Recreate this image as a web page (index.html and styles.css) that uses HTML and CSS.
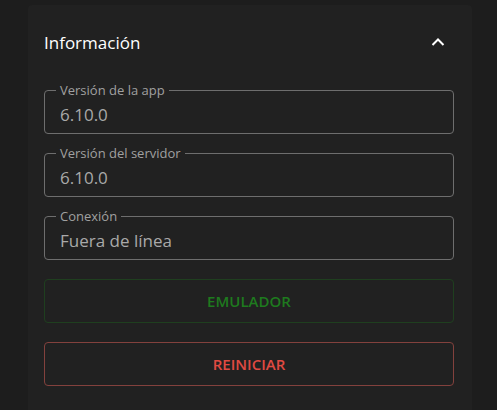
FILE: index.html
```html
<!DOCTYPE html>
<html lang="es">
<head>
  <meta charset="UTF-8">
  <title>Información</title>
  <link rel="stylesheet" href="styles.css">
</head>
<body>
  <div class="panel">
    <div class="panel-head">
      <span class="panel-title">Información</span>
      <svg class="chevron" width="14" height="10" viewBox="0 0 14 10"><path d="M1.5 8 L7 2.5 L12.5 8" fill="none" stroke="#fff" stroke-width="2"/></svg>
    </div>
    <div class="field">
      <span class="field-label">Versión de la app</span>
      <span class="field-value">6.10.0</span>
    </div>
    <div class="field">
      <span class="field-label">Versión del servidor</span>
      <span class="field-value">6.10.0</span>
    </div>
    <div class="field">
      <span class="field-label">Conexión</span>
      <span class="field-value">Fuera de línea</span>
    </div>
    <button class="btn btn-green">Emulador</button>
    <button class="btn btn-red">Reiniciar</button>
  </div>
</body>
</html>
```

FILE: styles.css
```css
* { margin: 0; padding: 0; box-sizing: border-box; }
body {
  background: #1d1d1d;
  font-family: 'Open Sans', 'Noto Sans', sans-serif;
  height: 410px;
  overflow: hidden;
}
.panel {
  margin: 5px 0 0 28px;
  width: 444px;
  height: 420px;
  background: #212121;
  border-radius: 4px;
  padding: 21px 18px 0 16px;
  display: flex;
  flex-direction: column;
  gap: 19px;
}
.panel-head {
  height: 32px;
  display: flex;
  align-items: center;
  justify-content: space-between;
  margin-bottom: 13px;
  padding-right: 9px;
}
.panel-title {
  color: #fff;
  font-size: 17px;
}
.field {
  position: relative;
  height: 44px;
  border: 1px solid #6e6e6e;
  border-radius: 4px;
  display: flex;
  align-items: center;
  padding: 4px 15px 0;
}
.field-label {
  position: absolute;
  top: -9px;
  left: 11px;
  padding: 0 4px;
  background: #212121;
  color: #a0a0a0;
  font-size: 13px;
  line-height: 16px;
}
.field-value {
  color: #a9a9a9;
  font-size: 17px;
}
.btn {
  height: 44px;
  background: transparent;
  border-radius: 4px;
  font-family: inherit;
  font-size: 15px;
  font-weight: 600;
  text-transform: uppercase;
}
.btn-green {
  border: 1px solid #1f3f1f;
  color: #1e7a1e;
}
.btn-red {
  border: 1px solid #83413d;
  color: #e04a42;
}
```
